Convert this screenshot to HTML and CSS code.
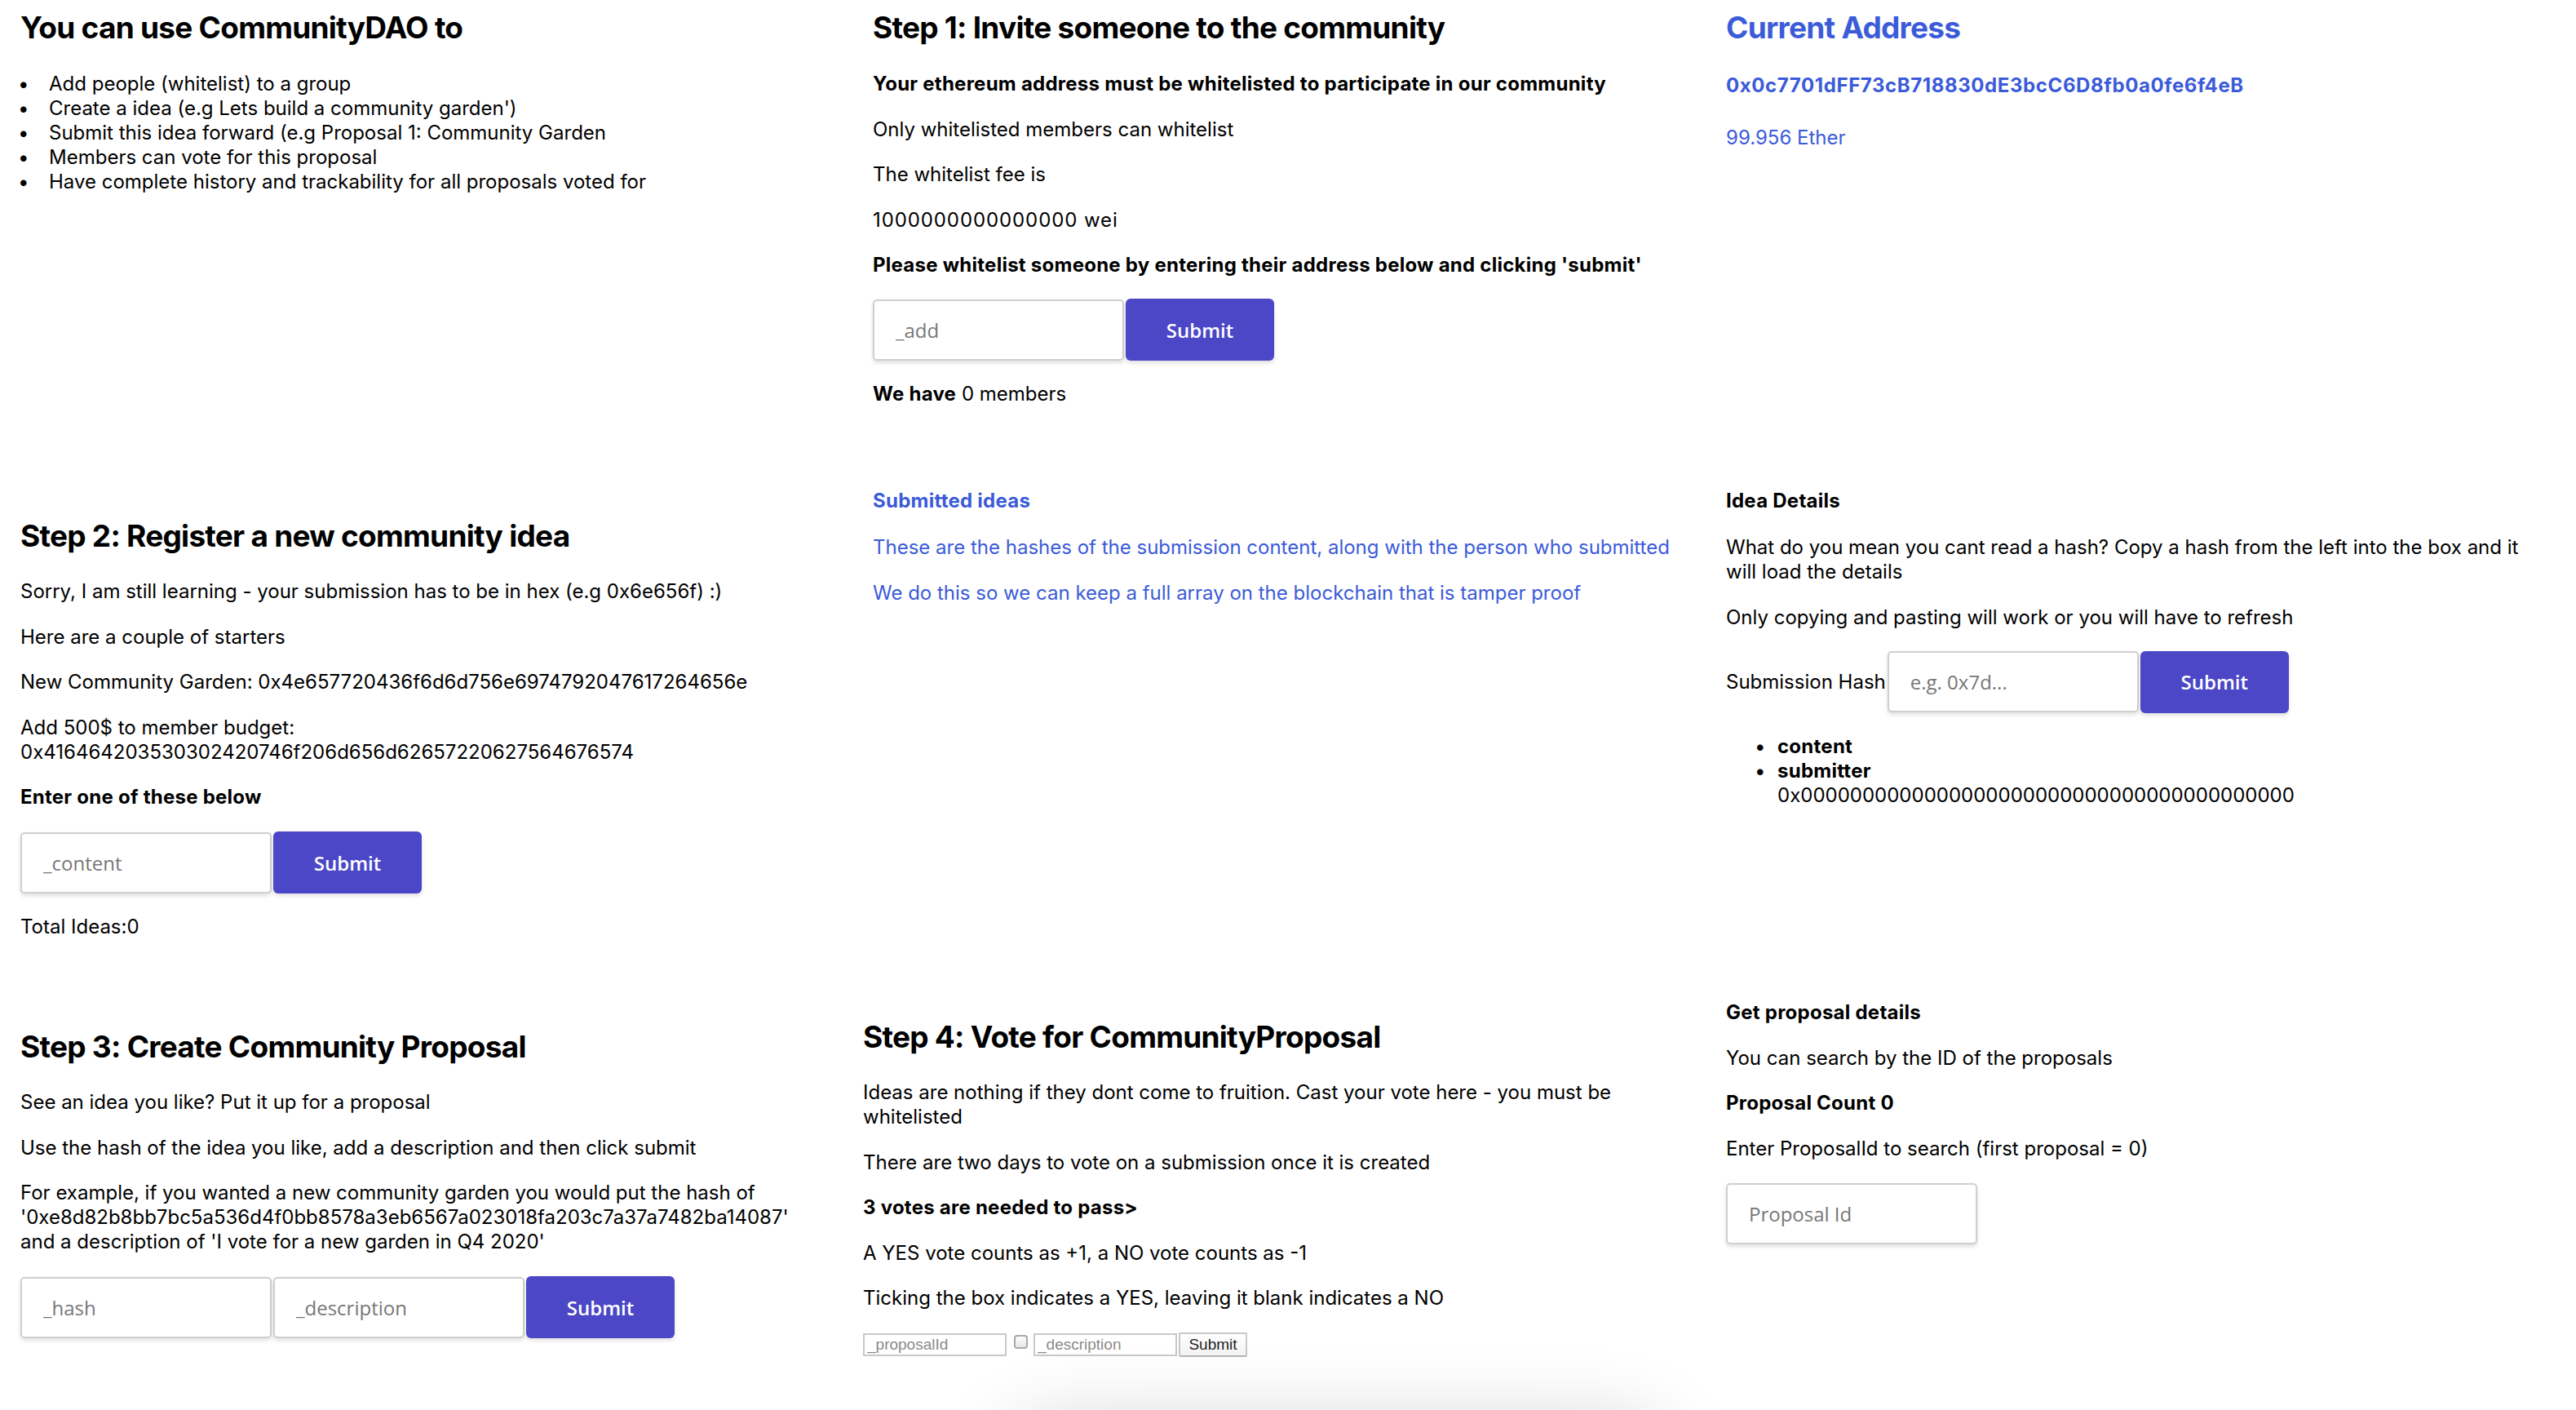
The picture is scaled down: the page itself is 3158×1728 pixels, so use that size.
FILE: index.html
```html
<!DOCTYPE html>
<html lang="en">
<head>
<meta charset="utf-8">
<title>CommunityDAO</title>
<link rel="stylesheet" href="styles.css">
</head>
<body>
<div class="page">
  <section class="row row1">
    <div class="col c1">
      <h2 class="title t-r1">You can use CommunityDAO to</h2>
      <ul class="features">
        <li>Add people (whitelist) to a group</li>
        <li>Create a idea (e.g Lets build a community garden')</li>
        <li>Submit this idea forward (e.g Proposal 1: Community Garden</li>
        <li>Members can vote for this proposal</li>
        <li>Have complete history and trackability for all proposals voted for</li>
      </ul>
    </div>
    <div class="col c2">
      <h2 class="title t-r1">Step 1: Invite someone to the community</h2>
      <p class="b">Your ethereum address must be whitelisted to participate in our community</p>
      <p>Only whitelisted members can whitelist</p>
      <p>The whitelist fee is</p>
      <p class="num">1000000000000000 wei</p>
      <p class="b before-form">Please whitelist someone by entering their address below and clicking 'submit'</p>
      <form class="form form-gap">
        <input class="field" type="text" placeholder="_add">
        <button class="btn" type="button">Submit</button>
      </form>
      <p><b>We have</b> 0 members</p>
    </div>
    <div class="col c3 blue">
      <h2 class="title t-addr">Current Address</h2>
      <p class="b addr">0x0c7701dFF73cB718830dE3bcC6D8fb0a0fe6f4eB</p>
      <p>99.956 Ether</p>
    </div>
  </section>

  <section class="row row2">
    <div class="col c1 r2c1">
      <h2 class="title t-r2">Step 2: Register a new community idea</h2>
      <p>Sorry, I am still learning - your submission has to be in hex (e.g 0x6e656f) :)</p>
      <p>Here are a couple of starters</p>
      <p>New Community Garden: 0x4e657720436f6d6d756e6974792047617264656e</p>
      <p>Add 500$ to member budget: 0x416464203530302420746f206d656d62657220627564676574</p>
      <p class="b before-form2">Enter one of these below</p>
      <form class="form form-gap">
        <input class="field" type="text" placeholder="_content">
        <button class="btn" type="button">Submit</button>
      </form>
      <p>Total Ideas:0</p>
    </div>
    <div class="col c2 r2c2 blue">
      <p class="b sub-head">Submitted ideas</p>
      <p>These are the hashes of the submission content, along with the person who submitted</p>
      <p>We do this so we can keep a full array on the blockchain that is tamper proof</p>
    </div>
    <div class="col c3 r2c3">
      <p class="b sub-head">Idea Details</p>
      <p>What do you mean you cant read a hash? Copy a hash from the left into the box and it will load the details</p>
      <p class="before-form3">Only copying and pasting will work or you will have to refresh</p>
      <form class="form form-gap">
        <label class="label">Submission Hash</label>
        <input class="field" type="text" placeholder="e.g. 0x7d...">
        <button class="btn" type="button">Submit</button>
      </form>
      <ul class="details">
        <li><b>content</b></li>
        <li><b>submitter</b><br>0x0000000000000000000000000000000000000000</li>
      </ul>
    </div>
  </section>

  <section class="row row3">
    <div class="col c1 r3c1">
      <h2 class="title t-r2">Step 3: Create Community Proposal</h2>
      <p>See an idea you like? Put it up for a proposal</p>
      <p>Use the hash of the idea you like, add a description and then click submit</p>
      <p class="before-form2">For example, if you wanted a new community garden you would put the hash of '0xe8d82b8bb7bc5a536d4f0bb8578a3eb6567a023018fa203c7a37a7482ba14087' and a description of 'I vote for a new garden in Q4 2020'</p>
      <form class="form">
        <input class="field" type="text" placeholder="_hash">
        <input class="field" type="text" placeholder="_description">
        <button class="btn" type="button">Submit</button>
      </form>
    </div>
    <div class="col c2 r3c2">
      <h2 class="title t-r2">Step 4: Vote for CommunityProposal</h2>
      <p>Ideas are nothing if they dont come to fruition. Cast your vote here - you must be whitelisted</p>
      <p>There are two days to vote on a submission once it is created</p>
      <p class="b">3 votes are needed to pass&gt;</p>
      <p>A YES vote counts as +1, a NO vote counts as -1</p>
      <p class="before-form2">Ticking the box indicates a YES, leaving it blank indicates a NO</p>
      <form class="mini-form">
        <input class="mini-field" type="text" placeholder="_proposalId">
        <input class="mini-check" type="checkbox">
        <input class="mini-field" type="text" placeholder="_description">
        <button class="mini-btn" type="button">Submit</button>
      </form>
    </div>
    <div class="col c3 r3c3">
      <p class="b">Get proposal details</p>
      <p>You can search by the ID of the proposals</p>
      <p class="b">Proposal Count 0</p>
      <p class="before-form4">Enter ProposalId to search (first proposal = 0)</p>
      <input class="field" type="text" placeholder="Proposal Id">
    </div>
  </section>

  <div class="glow"></div>
</div>
</body>
</html>
```

FILE: styles.css
```css
html, body {
  margin: 0;
  padding: 0;
  background: #ffffff;
}

body {
  font-family: Inter, "Liberation Sans", sans-serif;
  font-size: 24px;
  line-height: 30px;
  color: #000000;
}

.page {
  position: relative;
  height: 1728px;
  overflow: hidden;
}

.row {
  display: grid;
  grid-template-columns: 1045px 1046px 1042px;
  padding-left: 25px;
}

.row1 { height: 560px; }
.row2 { height: 620px; }
.row3 { height: 548px; }

.col {
  display: flex;
  flex-direction: column;
  align-items: flex-start;
}

.c1 { width: 975px; }
.c2 { width: 1010px; }
.c3 { width: 985px; }

p {
  margin: 0 0 25.5px 0;
}

.b, b {
  font-weight: 700;
  letter-spacing: 0.25px;
}

.num { letter-spacing: 0.9px; }

.blue { color: #3b5bd9; }

.title {
  margin: 0;
  font-size: 37px;
  line-height: 42px;
  font-weight: 700;
  letter-spacing: -0.02em;
}

/* row 1 */
.row1 .col { padding-top: 13px; }
.t-r1 { margin-bottom: 33px; }
.t-addr { margin-bottom: 35px; }
.addr {
  margin-bottom: 34px;
  letter-spacing: 0.6px;
}

.features {
  margin: 0;
  padding-left: 35px;
  list-style: none;
}
.features li::before {
  content: "\2022";
  display: inline-block;
  width: 38px;
  margin-left: -38px;
}

.before-form { margin-bottom: 26px; }
.before-form2 { margin-bottom: 27px; }
.before-form3 { margin-bottom: 26px; }
.before-form4 { margin-bottom: 27.5px; }

.form {
  display: flex;
  align-items: center;
  gap: 2px;
}
.form-gap { margin-bottom: 26px; }

.field {
  box-sizing: border-box;
  width: 308px;
  height: 75px;
  margin: 0;
  padding: 0 26px;
  border: 2px solid #cfcfcf;
  border-radius: 5px;
  background: #ffffff;
  box-shadow: 0 3px 5px rgba(0, 0, 0, 0.12);
  font-family: "Open Sans", "Noto Sans", sans-serif;
  font-size: 24px;
  color: #333333;
  outline: none;
}
.field::placeholder { color: #777777; }

.btn {
  box-sizing: border-box;
  width: 182px;
  height: 76px;
  margin: 0;
  border: none;
  border-radius: 6px;
  background: #4b47c6;
  color: #ffffff;
  font-family: "Open Sans", "Noto Sans", sans-serif;
  font-size: 24px;
  font-weight: 600;
  box-shadow: 0 3px 5px rgba(0, 0, 0, 0.12);
}

.label {
  white-space: nowrap;
}

/* row 2 */
.r2c1 { padding-top: 76px; }
.t-r2 { margin-bottom: 32px; }
.r2c2, .r2c3 { padding-top: 39px; }
.sub-head { margin-bottom: 27px; }

.details {
  margin: 0;
  padding-left: 63px;
  list-style: none;
}
.details li::before {
  content: "\2022";
  display: inline-block;
  width: 28px;
  margin-left: -28px;
}

/* row 3 */
.r3c1 { padding-top: 82px; }
.r3c2 { padding-top: 70px; margin-left: -12px; }
.r3c3 { padding-top: 46px; }

.mini-form {
  display: flex;
  align-items: center;
}

.mini-field {
  box-sizing: border-box;
  width: 176px;
  height: 28px;
  margin: 0;
  padding: 0 3px;
  border: 2px solid #c9c9c9;
  border-radius: 0;
  background: #ffffff;
  font-family: "Liberation Sans", Arial, sans-serif;
  font-size: 19px;
  color: #222222;
  outline: none;
}
.mini-field::placeholder { color: #8a8a8a; }

.mini-check {
  -webkit-appearance: none;
  appearance: none;
  box-sizing: border-box;
  width: 17px;
  height: 17px;
  margin: 0 7px 0 9px;
  border: 2px solid #a9a9a9;
  border-radius: 4px;
  background: linear-gradient(#fcfcfc, #e6e6e6);
  position: relative;
  top: -4px;
}

.mini-btn {
  box-sizing: border-box;
  height: 30px;
  width: 84px;
  margin: 0 0 0 2px;
  padding: 0;
  border: 2px solid #c9c9c9;
  border-bottom-color: #b5b5b5;
  border-radius: 2px;
  background: linear-gradient(#ffffff, #f3f3f3);
  font-family: "Liberation Sans", Arial, sans-serif;
  font-size: 19px;
  color: #222222;
}

.glow {
  position: absolute;
  left: 1240px;
  top: 1750px;
  width: 800px;
  height: 100px;
  border-radius: 50px;
  background: #e8e8e8;
  box-shadow: 0 0 100px 0 rgba(0, 0, 0, 0.2);
}
```
